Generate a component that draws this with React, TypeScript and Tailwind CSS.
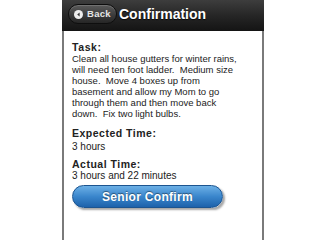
import React from "react";

const font = { fontFamily: '"Liberation Sans", Arial, Helvetica, sans-serif' };

export default function App() {
  const lines = [
    "Clean all house gutters for winter rains,",
    "will need ten foot ladder.  Medium size",
    "house.  Move 4 boxes up from",
    "basement and allow my Mom to go",
    "through them and then move back",
    "down.  Fix two light bulbs.",
  ];
  return (
    <div className="w-[320px] h-[240px] bg-white overflow-hidden flex pl-[62px]" style={font}>
      <div className="w-[202px] h-full flex flex-col">
        <div className="h-[31px] shrink-0 flex items-start pt-[4px] pl-[6px] bg-gradient-to-b from-[#3d3d3d] via-[#262626] to-[#141414]">
          <div className="h-[20px] w-[49px] rounded-full border border-[#0e0e0e] bg-gradient-to-b from-[#5a5a5a] to-[#262626] flex items-center pl-[5px] shadow-[inset_0_1px_0_rgba(255,255,255,0.15)]">
            <div className="w-[9px] h-[9px] rounded-full bg-[#eeeeee] flex items-center justify-center">
              <svg width="5" height="5" viewBox="0 0 5 5">
                <path d="M3.6 0.6 L1.2 2.5 L3.6 4.4 Z" fill="#333" />
              </svg>
            </div>
            <span className="ml-[4px] text-[9.5px] font-bold text-[#e6e6e6] leading-none tracking-[0.3px]">Back</span>
          </div>
          <span className="ml-[2px] mt-[3px] text-[14px] font-bold text-white leading-[14px] [text-shadow:0_1px_1px_rgba(0,0,0,0.8)]">
            Confirmation
          </span>
        </div>
        <div className="flex-1 border-x-2 border-[#7a7a7a] pl-[8px] pt-[11px] text-[#222]">
          <div className="text-[10.5px] font-bold leading-[11px] tracking-[0.6px]">Task:</div>
          <div className="text-[9.5px] leading-[11px] whitespace-pre">
            {lines.map((l, i) => (
              <div key={i}>{l}</div>
            ))}
          </div>
          <div className="mt-[9px] text-[10.5px] font-bold leading-[11px] tracking-[0.5px]">Expected Time:</div>
          <div className="mt-[2px] text-[10px] leading-[11px]">3 hours</div>
          <div className="mt-[7px] text-[10.5px] font-bold leading-[11px] tracking-[0.5px]">Actual Time:</div>
          <div className="text-[10px] leading-[11px]">3 hours and 22 minutes</div>
          <div className="mt-[4px] w-[151px] h-[23px] rounded-full border border-[#1c548f] bg-gradient-to-b from-[#6cb0e6] via-[#3a86cc] to-[#1d62ab] shadow-[2px_2px_2px_rgba(0,0,0,0.35)] flex items-center justify-center">
            <span className="text-[12px] font-bold text-white leading-none tracking-[0.3px] [text-shadow:0_-1px_1px_rgba(0,0,0,0.45)]">
              Senior Confirm
            </span>
          </div>
        </div>
      </div>
    </div>
  );
}
